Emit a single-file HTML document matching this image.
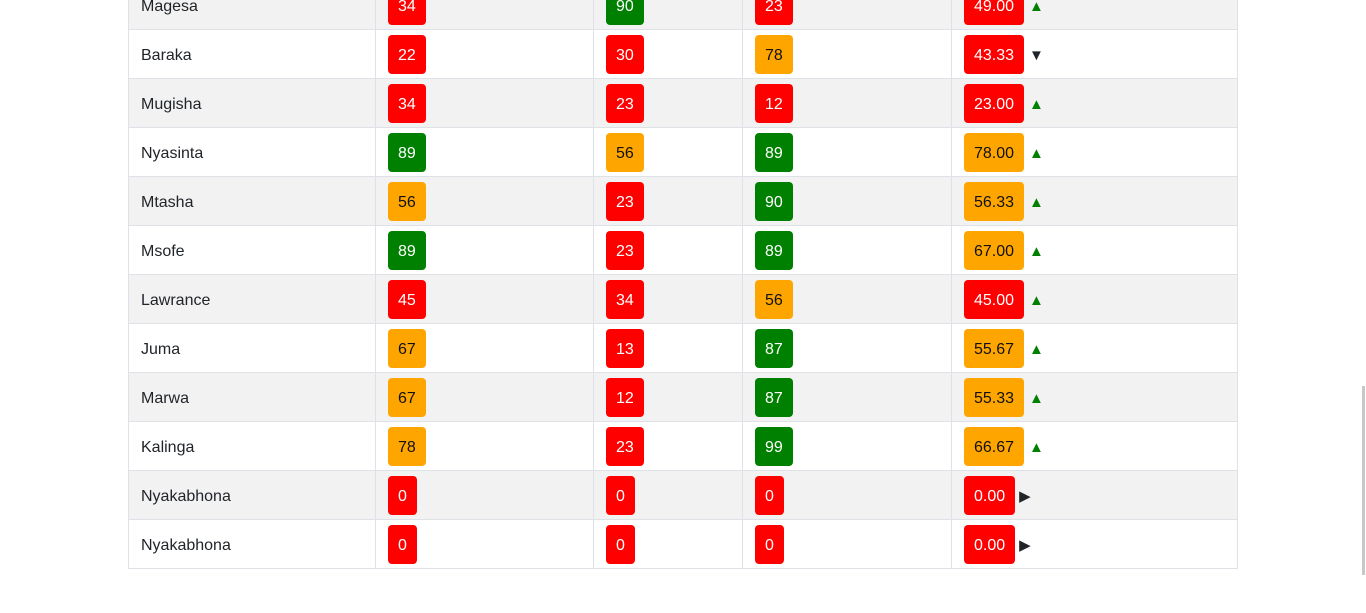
<!DOCTYPE html>
<html><head><style>
body{margin:0;width:1366px;height:613px;overflow:hidden;background:#fff;font-family:"Liberation Sans",sans-serif;font-size:16px;color:#212529;position:relative}
table{position:absolute;left:128px;top:-20px;width:1109px;border-collapse:collapse;table-layout:fixed}
td{border:1px solid #dee2e6;height:49px;padding:1px 12px 0 12px;box-sizing:border-box;vertical-align:middle;white-space:nowrap;line-height:39px}
td:first-child{padding-top:3px}
tr:nth-child(odd) td{background:#f2f2f2}
.b{display:inline-block;padding:0 10px;height:39px;line-height:42px;border-radius:4px;color:#fff;vertical-align:top;overflow:hidden}
.r{background:#ff0000}.g{background:#008000}.o{background:#ffa500;color:#111}
.u{color:#008000;font-size:15px;margin-left:5px;vertical-align:top;position:relative;top:1px}
.d{color:#212529;font-size:15px;margin-left:5px;vertical-align:top;position:relative;top:1px}
.sb{position:absolute;left:1362px;top:386px;width:3px;height:189px;background:#c8c8c8}
</style></head><body>
<table>
<colgroup><col style="width:247px"><col style="width:218px"><col style="width:149px"><col style="width:209px"><col style="width:286px"></colgroup>
<tr><td>Magesa</td><td><span class="b r">34</span></td><td><span class="b g">90</span></td><td><span class="b r">23</span></td><td><span class="b r">49.00</span><span class="u">▲</span></td></tr>
<tr><td>Baraka</td><td><span class="b r">22</span></td><td><span class="b r">30</span></td><td><span class="b o">78</span></td><td><span class="b r">43.33</span><span class="d">▼</span></td></tr>
<tr><td>Mugisha</td><td><span class="b r">34</span></td><td><span class="b r">23</span></td><td><span class="b r">12</span></td><td><span class="b r">23.00</span><span class="u">▲</span></td></tr>
<tr><td>Nyasinta</td><td><span class="b g">89</span></td><td><span class="b o">56</span></td><td><span class="b g">89</span></td><td><span class="b o">78.00</span><span class="u">▲</span></td></tr>
<tr><td>Mtasha</td><td><span class="b o">56</span></td><td><span class="b r">23</span></td><td><span class="b g">90</span></td><td><span class="b o">56.33</span><span class="u">▲</span></td></tr>
<tr><td>Msofe</td><td><span class="b g">89</span></td><td><span class="b r">23</span></td><td><span class="b g">89</span></td><td><span class="b o">67.00</span><span class="u">▲</span></td></tr>
<tr><td>Lawrance</td><td><span class="b r">45</span></td><td><span class="b r">34</span></td><td><span class="b o">56</span></td><td><span class="b r">45.00</span><span class="u">▲</span></td></tr>
<tr><td>Juma</td><td><span class="b o">67</span></td><td><span class="b r">13</span></td><td><span class="b g">87</span></td><td><span class="b o">55.67</span><span class="u">▲</span></td></tr>
<tr><td>Marwa</td><td><span class="b o">67</span></td><td><span class="b r">12</span></td><td><span class="b g">87</span></td><td><span class="b o">55.33</span><span class="u">▲</span></td></tr>
<tr><td>Kalinga</td><td><span class="b o">78</span></td><td><span class="b r">23</span></td><td><span class="b g">99</span></td><td><span class="b o">66.67</span><span class="u">▲</span></td></tr>
<tr><td>Nyakabhona</td><td><span class="b r">0</span></td><td><span class="b r">0</span></td><td><span class="b r">0</span></td><td><span class="b r">0.00</span><span class="d" style="margin-left:4px">▶</span></td></tr>
<tr><td>Nyakabhona</td><td><span class="b r">0</span></td><td><span class="b r">0</span></td><td><span class="b r">0</span></td><td><span class="b r">0.00</span><span class="d" style="margin-left:4px">▶</span></td></tr>
</table>
<div class="sb"></div>
</body></html>
